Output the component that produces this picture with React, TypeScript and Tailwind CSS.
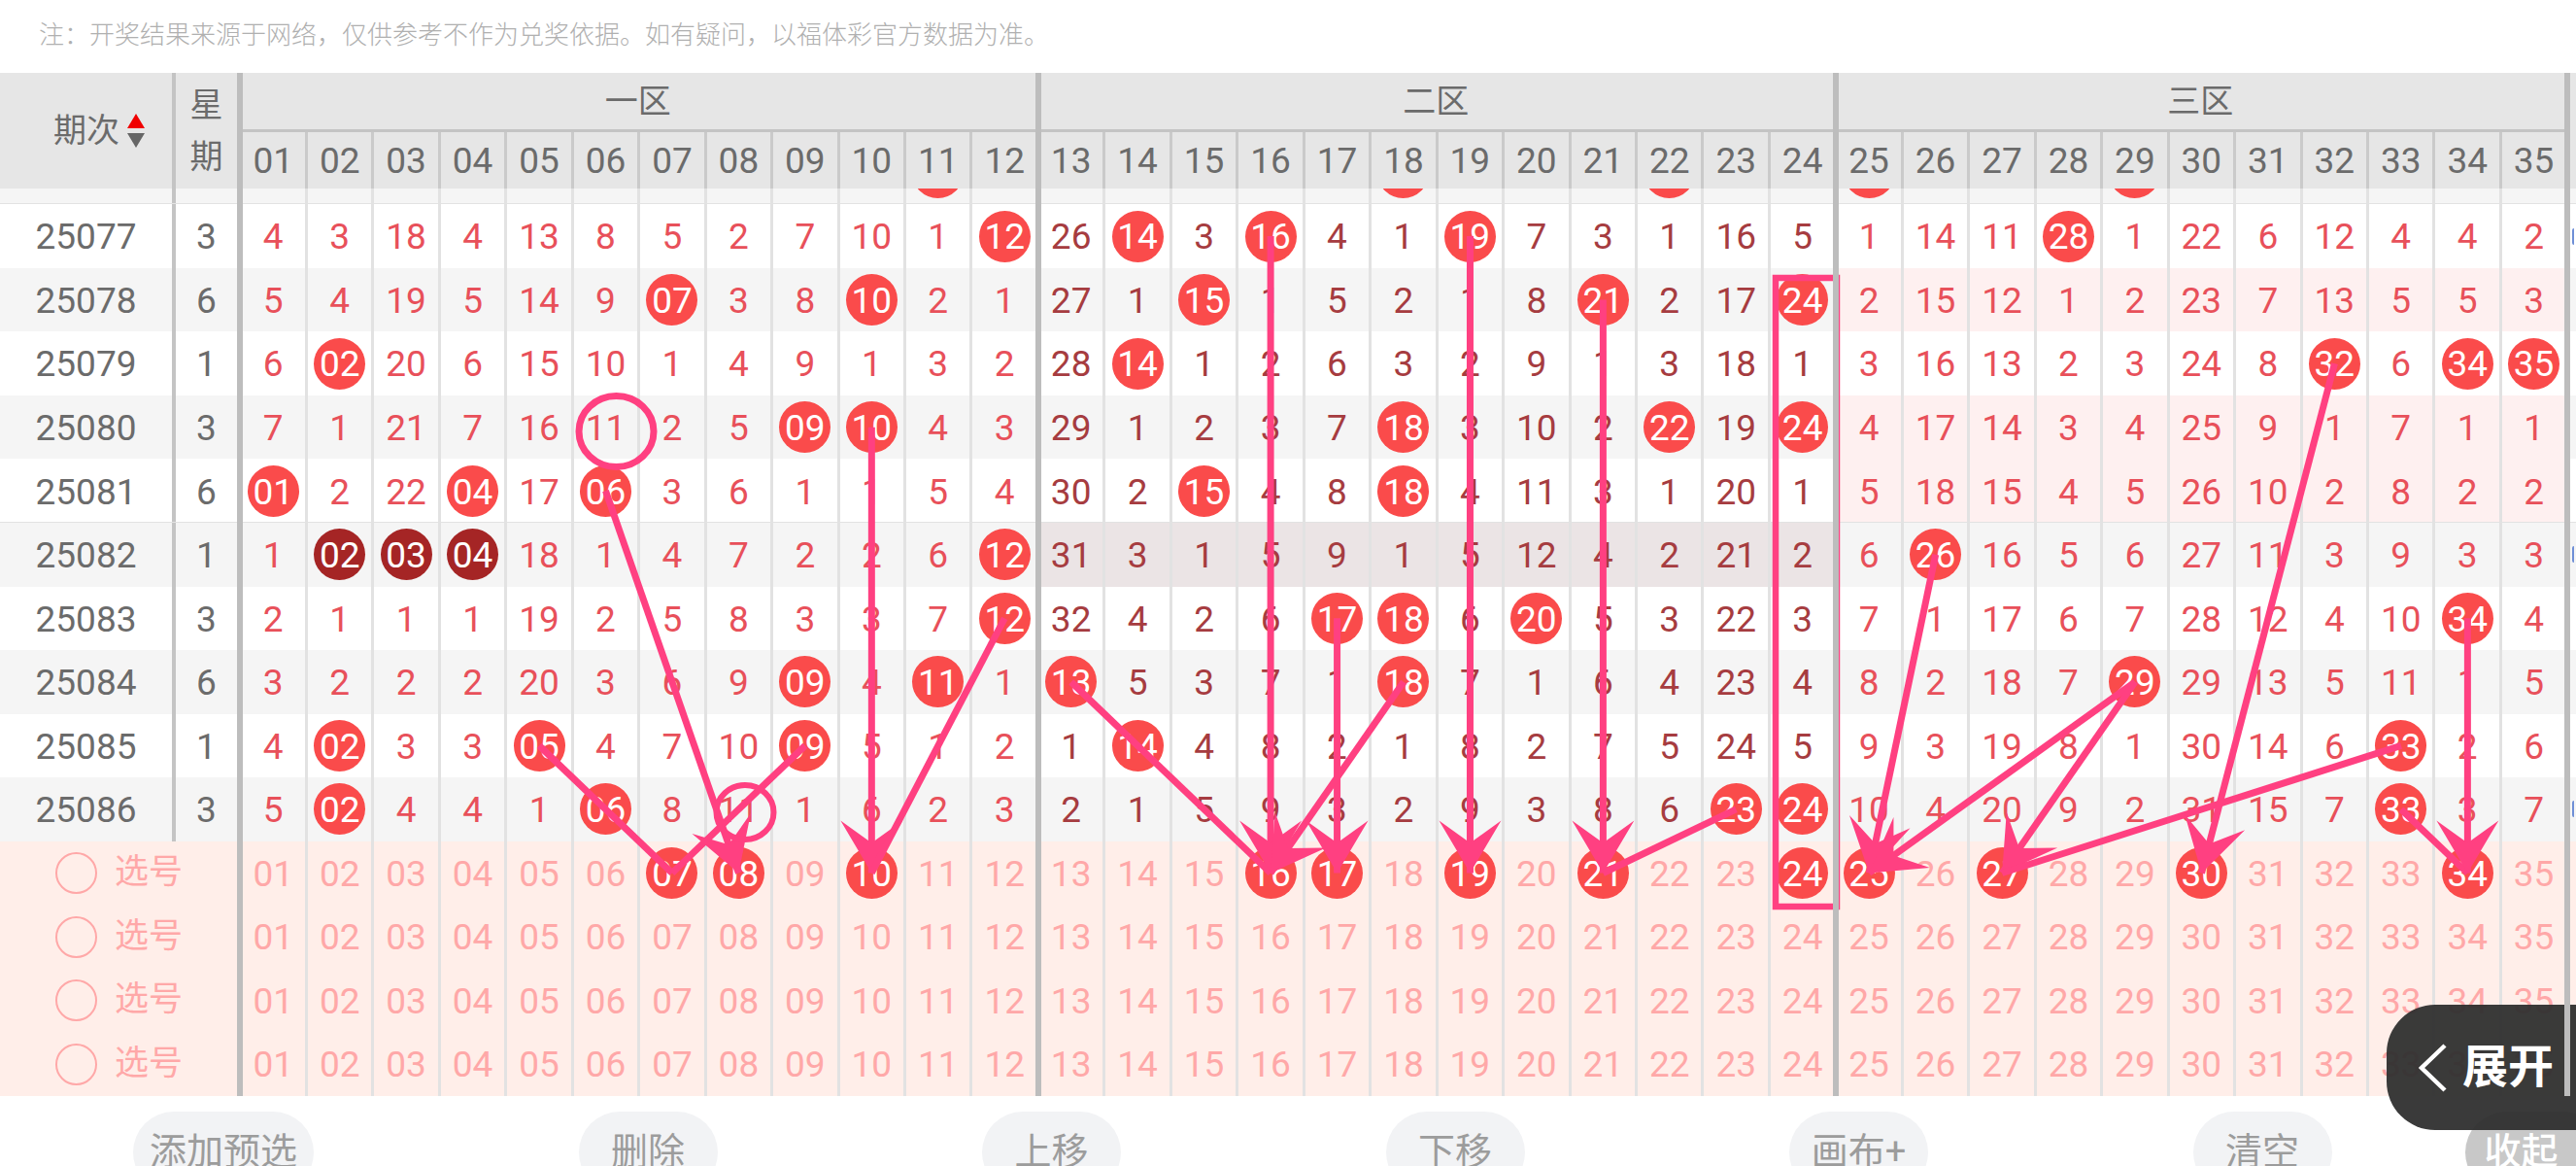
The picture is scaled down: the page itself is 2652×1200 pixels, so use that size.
import { Fragment } from 'react'

// *NN = hit ball, #NN = dark ball
const rows = [
  { id: '25077', week: '3', nums: '4 3 18 4 13 8 5 2 7 10 1 *12 26 *14 3 *16 4 1 *19 7 3 1 16 5 1 14 11 *28 1 22 6 12 4 4 2', pink: false, blue: true },
  { id: '25078', week: '6', nums: '5 4 19 5 14 9 *07 3 8 *10 2 1 27 1 *15 1 5 2 1 8 *21 2 17 *24 2 15 12 1 2 23 7 13 5 5 3', pink: true },
  { id: '25079', week: '1', nums: '6 *02 20 6 15 10 1 4 9 1 3 2 28 *14 1 2 6 3 2 9 1 3 18 1 3 16 13 2 3 24 8 *32 6 *34 *35', pink: false },
  { id: '25080', week: '3', nums: '7 1 21 7 16 11 2 5 *09 *10 4 3 29 1 2 3 7 *18 3 10 2 *22 19 *24 4 17 14 3 4 25 9 1 7 1 1', pink: true },
  { id: '25081', week: '6', nums: '*01 2 22 *04 17 *06 3 6 1 1 5 4 30 2 *15 4 8 *18 4 11 3 1 20 1 5 18 15 4 5 26 10 2 8 2 2', pink: true, line: true },
  { id: '25082', week: '1', nums: '1 #02 #03 #04 18 1 4 7 2 2 6 *12 31 3 1 5 9 1 5 12 4 2 21 2 6 *26 16 5 6 27 11 3 9 3 3', pink: false, mauve: true, blue: true },
  { id: '25083', week: '3', nums: '2 1 1 1 19 2 5 8 3 3 7 *12 32 4 2 6 *17 *18 6 *20 5 3 22 3 7 1 17 6 7 28 12 4 10 *34 4', pink: false },
  { id: '25084', week: '6', nums: '3 2 2 2 20 3 6 9 *09 4 *11 1 *13 5 3 7 1 *18 7 1 6 4 23 4 8 2 18 7 *29 29 13 5 11 1 5', pink: false },
  { id: '25085', week: '1', nums: '4 *02 3 3 *05 4 7 10 *09 5 1 2 1 *14 4 8 2 1 8 2 7 5 24 5 9 3 19 8 1 30 14 6 *33 2 6', pink: false },
  { id: '25086', week: '3', nums: '5 *02 4 4 1 *06 8 11 1 6 2 3 2 1 5 9 3 2 9 3 8 6 *23 *24 10 4 20 9 2 31 15 7 *33 3 7', pink: false, blue: true },
]

const prevBalls = [11, 18, 22, 25, 29]
const pickedBalls = [7, 8, 10, 16, 17, 19, 21, 24, 25, 27, 30, 34]
const columns = Array.from({ length: 35 }, (_, i) => i + 1)
const pad = (n: number) => String(n).padStart(2, '0')

const cx = (col: number) => 281.2 + 68.46 * (col - 1)
const cy = (row: number) => 243 + 65.55 * row

// from [row, col] to a column of the first pick row
const lines = [
  { from: [4, 6], to: 8, head: true },
  { from: [8, 5], to: 7 },
  { from: [8, 9], to: 7 },
  { from: [3, 10], to: 10, head: true },
  { from: [6, 12], to: 10 },
  { from: [7, 13], to: 16 },
  { from: [0, 16], to: 16, head: true },
  { from: [6, 17], to: 17, head: true },
  { from: [7, 18], to: 16, head: true },
  { from: [0, 19], to: 19, head: true },
  { from: [1, 21], to: 21, head: true },
  { from: [9, 23], to: 21 },
  { from: [5, 26], to: 25, head: true },
  { from: [7, 29], to: 25, head: true },
  { from: [7, 29], to: 27, head: true },
  { from: [8, 33], to: 27 },
  { from: [2, 32], to: 30, head: true },
  { from: [9, 33], to: 34 },
  { from: [6, 34], to: 34, head: true },
]

const Arrow = ({ from, to, head }: { from: number[]; to: number; head?: boolean }) => {
  const x1 = cx(from[1])
  const y1 = cy(from[0])
  const x2 = cx(to)
  const y2 = cy(10)
  const len = Math.hypot(x2 - x1, y2 - y1)
  const ux = (x2 - x1) / len
  const uy = (y2 - y1) / len
  const pt = (back: number, side: number) => `${x2 - ux * back - uy * side},${y2 - uy * back + ux * side}`
  return (
    <>
      <line x1={x1} y1={y1} x2={x2} y2={y2} stroke="#ff4081" strokeWidth={7} />
      {head && <polygon points={`${x2},${y2} ${pt(54, 32)} ${pt(31, 0)} ${pt(54, -32)}`} fill="#ff4081" />}
    </>
  )
}

const Ball = ({ label, dark }: { label: string; dark?: boolean }) => (
  <div className={`w-[53px] h-[53px] shrink-0 rounded-full flex items-center justify-center pt-[2px] text-white ${dark ? 'bg-[#a52525]' : 'bg-[#fa4b4b]'}`}>
    {label}
  </div>
)

// thick zone rule, takes no room in the row
const ZoneRule = () => <div className="relative z-10 w-[6px] shrink-0 -ml-[4px] -mr-[2px] bg-[#bdbdbd]" />

const Cell = ({ col, value, tint }: { col: number; value: string; tint?: string }) => {
  const inSecond = col > 12 && col < 25
  return (
    <>
      <div className={`w-[68.46px] shrink-0 border-r-[3px] border-[#e2e2e2] flex items-center justify-center ${inSecond ? 'text-[#a63c40]' : 'text-[#e8505a]'} ${tint ?? ''}`}>
        {value[0] === '*' ? <Ball label={value.slice(1)} /> : value[0] === '#' ? <Ball label={value.slice(1)} dark /> : <span className="pt-[2px]">{value}</span>}
      </div>
      {(col === 12 || col === 24 || col === 35) && <ZoneRule />}
    </>
  )
}

const Row = ({ row, even }: { row: (typeof rows)[number]; even: boolean }) => {
  const nums = row.nums.split(' ')
  return (
    <div className={`relative flex h-[65.55px] ${even ? 'bg-[#f5f5f5]' : 'bg-white'}`}>
      <div className="w-[177px] shrink-0 flex items-center justify-center pt-[2px] text-[#6b6b6b]">{row.id}</div>
      <div className="w-[4px] shrink-0 bg-[#c4c4c4]" />
      <div className="w-[63px] shrink-0 flex items-center justify-center pt-[2px] text-[#6b6b6b]">{row.week}</div>
      <div className="relative z-10 w-[6px] shrink-0 -mr-[1.5px] bg-[#bdbdbd]" />
      {nums.map((value, i) => {
        const col = i + 1
        let tint = ''
        if (row.pink && col > 24) tint = 'bg-[#fef0f0]'
        if (row.mauve && col > 12 && col < 25) tint = 'bg-[#ebe4e5]'
        return <Cell key={col} col={col} value={value} tint={tint} />
      })}
      {row.blue && <div className="self-center ml-[3.5px] w-[2px] h-[17px] bg-[#6f8fd6] rounded-l-full" />}
      {row.line && <div className="absolute inset-x-0 -bottom-[1.5px] h-[3px] bg-[#e2e2e2]" />}
    </div>
  )
}

const PrevRow = () => (
  <div className="relative flex h-[65.55px] -mt-[49.25px] bg-[#f5f5f5]">
    <div className="w-[177px] shrink-0" />
    <div className="w-[4px] shrink-0 bg-[#c4c4c4]" />
    <div className="w-[63px] shrink-0" />
    <div className="relative z-10 w-[6px] shrink-0 -mr-[1.5px] bg-[#bdbdbd]" />
    {columns.map((col) => (
      <Cell key={col} col={col} value={prevBalls.includes(col) ? `*${pad(col)}` : ''} />
    ))}
    <div className="absolute inset-x-0 -bottom-[1.5px] h-[3px] bg-[#e2e2e2]" />
  </div>
)

const PickRow = ({ balls }: { balls: number[] }) => (
  <div className="flex h-[65.55px] bg-[#ffeee9] text-[#ffa8a8]">
    <div className="w-[244px] shrink-0 flex items-center pl-[57px]">
      <div className="w-[43px] h-[43px] rounded-full border-[2.5px] border-[#ffa8a8]" />
      <span className="ml-[18px] text-[35px]">选号</span>
    </div>
    <div className="relative z-10 w-[6px] shrink-0 -mr-[1.5px] bg-[#bdbdbd]" />
    {columns.map((col) => (
      <Fragment key={col}>
        <div className="w-[68.46px] shrink-0 border-r-[3px] border-[#e2e2e2] flex items-center justify-center">
          {balls.includes(col) ? <Ball label={pad(col)} /> : <span className="pt-[2px]">{pad(col)}</span>}
        </div>
        {(col === 12 || col === 24 || col === 35) && <ZoneRule />}
      </Fragment>
    ))}
  </div>
)

const Zone = ({ title, cols, last }: { title: string; cols: number[]; last?: boolean }) => (
  <>
    <div className="flex flex-col shrink-0">
      <div className="h-[61px] border-b-[3px] border-[#c4c4c4] flex items-center justify-center pr-[5px] text-[34px]">{title}</div>
      <div className="flex h-[58px]">
        {cols.map((col) => (
          <div key={col} className="w-[68.46px] shrink-0 border-r-[3px] border-[#cacaca] flex items-center justify-center pt-[2px]">
            {pad(col)}
          </div>
        ))}
      </div>
    </div>
    <div className="relative z-10 w-[6px] shrink-0 -ml-[4px] -mr-[2px] bg-[#bdbdbd]" />
    {last && <div className="flex-1" />}
  </>
)

const Pill = ({ label, width }: { label: string; width: string }) => (
  <div className={`${width} h-[84px] shrink-0 rounded-[42px] bg-[#f2f3f5] flex items-center justify-center text-[38px] text-[#9c9c9c]`}>
    {label}
  </div>
)

export default function App() {
  return (
    <div className="relative w-[2652px] h-[1200px] overflow-hidden bg-white text-[37px] font-[family-name:Roboto,'Noto_Sans_CJK_SC',sans-serif]">
      <div className="h-[75px] flex items-center pl-[40px] pb-[3px] text-[26px] font-light text-[#b0b0b0]">
        注：开奖结果来源于网络，仅供参考不作为兑奖依据。如有疑问，以福体彩官方数据为准。
      </div>

      {/* table head */}
      <div className="flex h-[119px] bg-[#e6e6e6] text-[#6b6b6b]">
        <div className="w-[177px] shrink-0 flex items-center pl-[55px] gap-[8px] text-[34px]">
          期次
          <svg width="18" height="35" viewBox="0 0 18 35" className="shrink-0">
            <polygon points="9,0 18,15 0,15" fill="#f00000" />
            <polygon points="0,20 18,20 9,35" fill="#666666" />
          </svg>
        </div>
        <div className="w-[4px] shrink-0 bg-[#c4c4c4]" />
        <div className="w-[63px] shrink-0 flex flex-col items-center justify-center text-[34px] leading-[53px]">
          <span>星</span>
          <span>期</span>
        </div>
        <div className="relative z-10 w-[6px] shrink-0 -mr-[1.5px] bg-[#bdbdbd]" />
        <Zone title="一区" cols={columns.slice(0, 12)} />
        <Zone title="二区" cols={columns.slice(12, 24)} />
        <Zone title="三区" cols={columns.slice(24)} last />
      </div>

      {/* table body */}
      <div className="overflow-hidden">
        <PrevRow />
        {rows.map((row, i) => (
          <Row key={row.id} row={row} even={i % 2 === 1} />
        ))}
        <PickRow balls={pickedBalls} />
        <PickRow balls={[]} />
        <PickRow balls={[]} />
        <PickRow balls={[]} />
      </div>

      {/* bottom actions */}
      <div className="flex mt-[16px] pl-[137px] gap-[272.5px]">
        <Pill label="添加预选" width="w-[186px]" />
        <Pill label="删除" width="w-[143px]" />
        <Pill label="上移" width="w-[143px]" />
        <Pill label="下移" width="w-[143px]" />
        <Pill label="画布+" width="w-[143px]" />
        <Pill label="清空" width="w-[143px]" />
        <div className="w-[143px] h-[84px] shrink-0 -ml-[135.5px] rounded-[42px] bg-[#c8c8c8] flex items-center pl-[20px] text-[38px] font-medium text-white">
          收起
        </div>
      </div>

      {/* hand drawn marks on top of the table */}
      <svg width="2652" height="1200" className="absolute top-0 left-0 pointer-events-none">
        {lines.map((l, i) => (
          <Arrow key={i} from={l.from} to={l.to} head={l.head} />
        ))}
        <ellipse cx="634.5" cy="444" rx="38.5" ry="36.5" fill="none" stroke="#ff4081" strokeWidth={7} />
        <ellipse cx="767" cy="836" rx="29.5" ry="28" fill="none" stroke="#ff4081" strokeWidth={6} />
        <rect x="1828" y="286" width="63" height="647" fill="none" stroke="#ff4081" strokeWidth={6.5} />
      </svg>

      <div className="absolute right-0 top-[1034px] w-[195px] h-[129px] rounded-l-[50px] bg-[#2f2f2f]/95 flex items-center pl-[33px] text-white">
        <svg width="29" height="50" viewBox="0 0 29 50" className="shrink-0">
          <polyline points="27,2 3,25 27,48" fill="none" stroke="#ffffff" strokeWidth={4.5} />
        </svg>
        <span className="ml-[16px] text-[47px] font-bold">展开</span>
      </div>
    </div>
  )
}
